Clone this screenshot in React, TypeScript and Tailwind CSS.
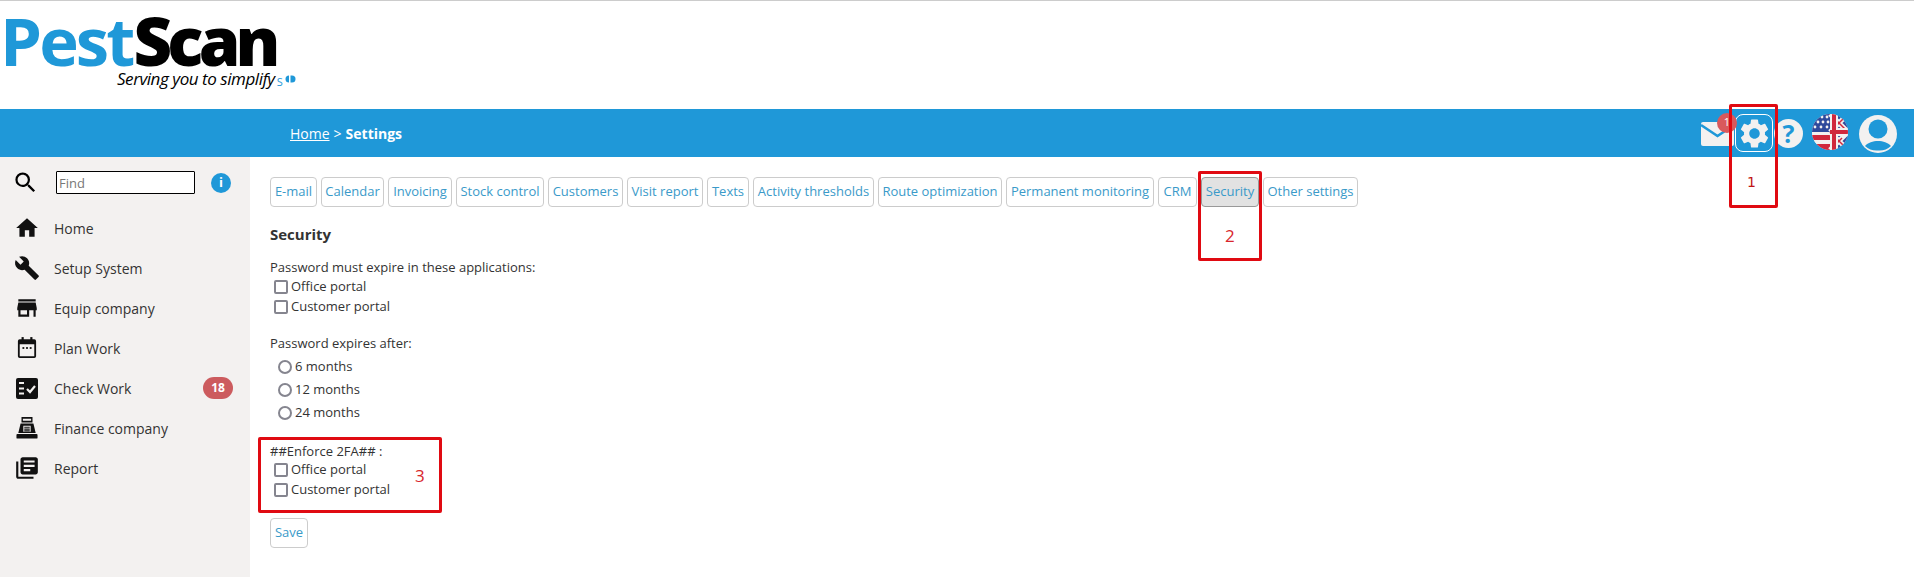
import { MdSearch, MdHome, MdBuild, MdStore, MdSettings, MdLibraryBooks } from "react-icons/md";

const tabs = [
  { t: "E-mail", w: "w-[47px]" },
  { t: "Calendar", w: "w-[63px]" },
  { t: "Invoicing", w: "w-[64px]" },
  { t: "Stock control", w: "w-[88px]" },
  { t: "Customers", w: "w-[75px]" },
  { t: "Visit report", w: "w-[76px]" },
  { t: "Texts", w: "w-[42px]" },
  { t: "Activity thresholds", w: "w-[121px]" },
  { t: "Route optimization", w: "w-[124px]" },
  { t: "Permanent monitoring", w: "w-[148px]" },
  { t: "CRM", w: "w-[39px]" },
  { t: "Security", w: "w-[58px]" },
  { t: "Other settings", w: "w-[95px]" },
];

function CalendarIcon() {
  return (
    <svg width="20" height="22" viewBox="0 0 22 24" fill="#111">
      <rect x="5" y="0" width="2.4" height="4" />
      <rect x="14.6" y="0" width="2.4" height="4" />
      <path fillRule="evenodd" d="M3 2.500h16a2 2 0 0 1 2 2V21a2 2 0 0 1-2 2H3a2 2 0 0 1-2-2V4.500a2 2 0 0 1 2-2zM3 8v13h16V8z" />
      <rect x="6" y="11" width="2" height="2" /><rect x="10" y="11" width="2" height="2" /><rect x="14" y="11" width="2" height="2" />
    </svg>
  );
}
function CheckIcon() {
  return (
    <svg width="22" height="21" viewBox="0 0 22 21">
      <rect x="0" y="0" width="22" height="21" rx="2" fill="#111" />
      <path d="M3 5h5M3 10.500h5M3 15.500h5" stroke="#f3f1f0" strokeWidth="2" />
      <path d="M11 11l3 3 5-6" stroke="#f3f1f0" strokeWidth="2.200" fill="none" />
    </svg>
  );
}
function RegisterIcon() {
  return (
    <svg width="22" height="22" viewBox="0 0 24 24" fill="#111">
      <path fillRule="evenodd" d="M6 0h12v6H6zM7.500 1.800v2.400h9V1.800z" />
      <path fillRule="evenodd" d="M5 7h14l2.500 10.500h-19zM8 9.500v6.500h8V9.500z" />
      <path d="M9 10.500h6v1.300H9zM9 12.500h6v1.300H9zM9 14.500h6v1.200H9z" />
      <rect x="0.500" y="18.500" width="23" height="5" rx="1" />
    </svg>
  );
}
function Flag() {
  return (
    <svg width="36" height="36" viewBox="0 0 36 36">
      <defs><clipPath id="c"><circle cx="18" cy="18" r="18" /></clipPath></defs>
      <g clipPath="url(#c)">
        <rect width="36" height="36" fill="#f3f1f0" />
        <rect x="0" y="0" width="18" height="18" fill="#2f4a9c" />
        <rect x="0" y="18" width="18" height="4" fill="#f3f1f0" />
        <rect x="0" y="21" width="18" height="5" fill="#d0283c" />
        <rect x="0" y="26" width="18" height="4" fill="#f3f1f0" />
        <rect x="0" y="30" width="18" height="6" fill="#d0283c" />
        <g fill="#f3f1f0">
          <circle cx="10" cy="3" r="1.400"/><circle cx="15" cy="3" r="1.400"/><circle cx="6" cy="8" r="1.400"/><circle cx="11" cy="8" r="1.400"/><circle cx="16" cy="8" r="1.400"/><circle cx="3" cy="13" r="1.400"/><circle cx="9" cy="13" r="1.400"/><circle cx="15" cy="13" r="1.400"/>
        </g>
        <rect x="18" y="0" width="18" height="36" fill="#2f4a9c" />
        <path d="M18 0L36 18M36 0L18 18M18 36L36 18M36 36L18 18" stroke="#f3f1f0" strokeWidth="5" />
        <path d="M18 0L36 18M36 0L24 12M18 36L30 24M36 36L18 18" stroke="#d0283c" strokeWidth="1.500" />
        <rect x="18" y="14" width="18" height="8" fill="#f3f1f0" />
        <rect x="18" y="0" width="8" height="36" fill="#f3f1f0" />
        <rect x="18" y="16" width="18" height="4" fill="#d0283c" />
        <rect x="20" y="0" width="4" height="36" fill="#d0283c" />
      </g>
    </svg>
  );
}
function Mail() {
  return (
    <svg width="33" height="24" viewBox="0 0 33 24">
      <rect width="33" height="24" rx="2" fill="#f3f1f0" />
      <path d="M0 3l16.500 11L33 3" fill="none" stroke="#1f98d8" strokeWidth="2.500" />
    </svg>
  );
}
function User() {
  return (
    <svg width="38" height="38" viewBox="0 0 38 38">
      <circle cx="19" cy="19" r="19" fill="#f3f1f0" />
      <circle cx="19" cy="14" r="9.500" fill="#1f98d8" />
      <path d="M6 31C9 27.500 14 26 19 26s10 1.500 13 5A17 17 0 0 1 19 35.500A17 17 0 0 1 6 31z" fill="#1f98d8" />
    </svg>
  );
}

const nav = [
  { label: "Home", icon: <MdHome size={26} /> },
  { label: "Setup System", icon: <MdBuild size={26} /> },
  { label: "Equip company", icon: <MdStore size={26} /> },
  { label: "Plan Work", icon: <CalendarIcon /> },
  { label: "Check Work", icon: <CheckIcon />, badge: "18" },
  { label: "Finance company", icon: <RegisterIcon /> },
  { label: "Report", icon: <MdLibraryBooks size={26} /> },
];

function Check({ label }: { label: string }) {
  return (
    <label className="flex h-5 items-center pl-[4px]">
      <span className="mr-[3px] h-[14px] w-[14px] rounded-[2px] border-2 border-[#85858f] bg-white" />
      {label}
    </label>
  );
}
function Radio({ label }: { label: string }) {
  return (
    <label className="flex h-[23px] items-center pl-[8px]">
      <span className="mr-[3px] h-[14px] w-[14px] rounded-full border-2 border-[#85858f] bg-white" />
      {label}
    </label>
  );
}
function RedBox({ className }: { className: string }) {
  return <div className={`pointer-events-none absolute rounded-[2px] border-[3px] border-[#e00a12] ${className}`} />;
}

export default function App() {
  return (
    <div className="relative flex h-[577px] w-[1914px] flex-col overflow-hidden bg-white font-['Open_Sans',sans-serif] text-[13px] text-[#333]">
      <div className="h-[109px] border-t border-[#ccc] pt-[9px]">
        <div className="flex h-[60px] text-[67px] leading-[60px] font-bold">
          <span className="tracking-[-2.9px] text-[#1f98d8]">Pest</span><span className="ml-[1px] font-extrabold tracking-[-4.8px] text-black">Scan</span>
        </div>
        <div className="flex h-[18px] items-start pl-[117px] text-[17px] leading-[18px] tracking-[-0.45px] text-black italic">
          Serving you to simplify
          <span className="mt-[6px] ml-[2px] text-[11px] leading-[12px] tracking-normal text-[#1f98d8] not-italic">S</span>
          <svg width="12" height="8" viewBox="0 0 12 8" className="mt-[5px] ml-[1px]" fill="#1f98d8">
            <path d="M5 0.500A3.500 3.500 0 0 0 5 7.500z" />
            <path d="M6.500 0.500h1.500a3.500 3.500 0 0 1 0 7H6.500z" />
          </svg>
        </div>
      </div>

      <div className="flex h-[48px] items-center bg-[#1f98d8] pl-[290px] text-[14px] text-white">
        <span className="underline">Home</span>
        <span className="ml-1">&gt;</span>
        <span className="ml-1 font-bold">Settings</span>
        <div className="ml-auto flex items-center pr-[17px]">
          <div className="relative mr-[1px] pt-[1px]">
            <Mail />
            <span className="absolute -top-[8px] right-[-3px] flex h-[20px] w-[20px] items-center justify-center rounded-full bg-[#d9595c] text-[11px] text-white">1</span>
          </div>
          <div className="flex h-[38px] w-[38px] items-center justify-center rounded-[8px] border border-white">
            <MdSettings size={35} className="text-[#f3f1f0]" />
          </div>
          <div className="ml-[1px] flex h-[29px] w-[29px] items-center justify-center rounded-full bg-[#f3f1f0] text-[25px] leading-none font-bold text-[#1f98d8]">?</div>
          <div className="-mt-[2px] ml-[9px]"><Flag /></div>
          <div className="mt-[2px] ml-[11px]"><User /></div>
        </div>
      </div>

      <div className="flex flex-1">
        <aside className="w-[250px] bg-[#f3f1f0] text-[14px]">
          <div className="flex h-[51px] items-center">
            <MdSearch size={27} className="ml-[12px] text-black" />
            <input placeholder="Find" className="ml-[17px] h-[23px] w-[139px] rounded-[1px] border border-black bg-white px-[2px] text-[13px] outline-none placeholder:text-[#777]" />
            <span className="ml-[16px] flex h-5 w-5 items-center justify-center rounded-full bg-[#1f98d8] text-[13px] font-bold text-white">i</span>
          </div>
          <nav>
            {nav.map((n) => (
              <div key={n.label} className="flex h-[40px] items-center">
                <div className="flex w-[54px] justify-center text-[#111]">{n.icon}</div>
                <span>{n.label}</span>
                {n.badge && <span className="mr-[17px] ml-auto flex h-[22px] w-[30px] items-center justify-center rounded-[11px] bg-[#cc5b5e] text-[12px] font-bold text-white">{n.badge}</span>}
              </div>
            ))}
          </nav>
        </aside>

        <main className="flex-1 pt-[20px] pl-[20px]">
          <div className="flex gap-[4px]">
            {tabs.map(({ t, w }) => (
              <div key={t} className={`flex h-[30px] items-center justify-center rounded-[4px] border whitespace-nowrap text-[#3a9ac9] ${w} ${t === "Security" ? "border-[#999] bg-[#e2e2e2]" : "border-[#ccc] bg-white"}`}>{t}</div>
            ))}
          </div>
          <h2 className="mt-[17px] text-[15px] leading-[20px] font-bold">Security</h2>
          <p className="mt-[13px] leading-[20px]">Password must expire in these applications:</p>
          <Check label="Office portal" />
          <Check label="Customer portal" />
          <p className="mt-[16px] leading-[20px]">Password expires after:</p>
          <div className="mt-[2px]">
            <Radio label="6 months" />
            <Radio label="12 months" />
            <Radio label="24 months" />
          </div>
          <p className="mt-[19px] leading-[17px]">##Enforce 2FA## :</p>
          <Check label="Office portal" />
          <Check label="Customer portal" />
          <div className="mt-[18px] flex h-[30px] w-[38px] items-center justify-center rounded-[4px] border border-[#ccc] text-[#3a9ac9]">Save</div>
        </main>
      </div>

      <RedBox className="top-[104px] left-[1729px] h-[104px] w-[49px]" />
      <span className="absolute top-[172px] left-[1747px] font-['DejaVu_Sans',sans-serif] text-[14px] leading-[20px] font-medium text-[#c01515]">1</span>
      <RedBox className="top-[171px] left-[1198px] h-[90px] w-[64px]" />
      <span className="absolute top-[225px] left-[1225px] text-[17px] leading-[22px] text-[#d8262c]">2</span>
      <RedBox className="top-[437px] left-[258px] h-[76px] w-[184px]" />
      <span className="absolute top-[465px] left-[415px] text-[17px] leading-[22px] text-[#d8262c]">3</span>
    </div>
  );
}
